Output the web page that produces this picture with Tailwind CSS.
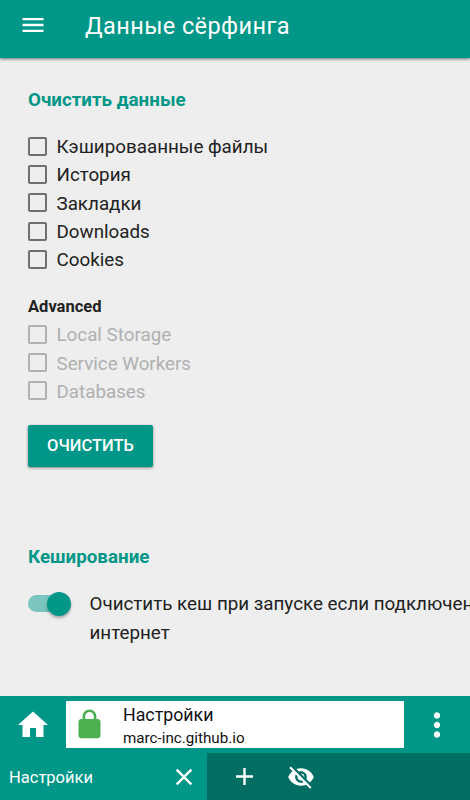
<!DOCTYPE html>
<html lang="ru">
<head>
<meta charset="utf-8">
<title>Данные сёрфинга</title>
<script src="https://cdn.jsdelivr.net/npm/@tailwindcss/browser@4"></script>
</head>
<body class="w-[470px] h-[800px] overflow-hidden flex flex-col bg-[#eeeeee] font-[Roboto,sans-serif] text-[#212121]">
<header class="relative z-10 h-[58px] shrink-0 bg-[#009788] shadow-[0_1px_3px_rgba(0,0,0,0.55)] flex items-center pl-[19px] pb-[8px] text-white">
  <svg class="size-[28px]" viewBox="0 0 24 24" fill="currentColor"><path d="M3 18h18v-2H3v2zm0-5h18v-2H3v2zm0-7v2h18V6H3z"/></svg>
  <h1 class="ml-[38px] pt-[2px] text-[23.5px] leading-[28px] tracking-[0.4px] whitespace-nowrap">Данные сёрфинга</h1>
</header>

<main class="grow overflow-hidden pl-[28px]">
  <h2 class="mt-[30px] h-[24px] leading-[24px] text-[18.8px] font-bold text-[#009788]">Очистить данные</h2>
  <ul class="mt-[21px] text-[18.8px] leading-[28.2px] whitespace-nowrap">
    <li class="flex items-center gap-[9.5px] h-[28.2px]"><span class="mb-[2px] size-[19px] border-2 border-[#707070] rounded-[2px]"></span><span>Кэшироваанные файлы</span></li>
    <li class="flex items-center gap-[9.5px] h-[28.2px]"><span class="mb-[2px] size-[19px] border-2 border-[#707070] rounded-[2px]"></span><span>История</span></li>
    <li class="flex items-center gap-[9.5px] h-[28.2px]"><span class="mb-px size-[19px] border-2 border-[#707070] rounded-[2px]"></span><span class="pt-px">Закладки</span></li>
    <li class="flex items-center gap-[9.5px] h-[28.2px]"><span class="mb-px size-[19px] border-2 border-[#707070] rounded-[2px]"></span><span>Downloads</span></li>
    <li class="flex items-center gap-[9.5px] h-[28.2px]"><span class="mb-px size-[19px] border-2 border-[#707070] rounded-[2px]"></span><span>Cookies</span></li>
  </ul>
  <h3 class="mt-[20px] h-[26px] leading-[26px] text-[16.5px] font-bold">Advanced</h3>
  <ul class="mt-[1px] text-[18.8px] leading-[28.2px] text-[#b0b0b0] whitespace-nowrap">
    <li class="flex items-center gap-[9.5px] h-[28.2px]"><span class="mb-px size-[19px] border-2 border-[#b0b0b0] rounded-[2px]"></span><span>Local Storage</span></li>
    <li class="flex items-center gap-[9.5px] h-[28.2px]"><span class="mb-px size-[19px] border-2 border-[#b0b0b0] rounded-[2px]"></span><span class="pt-px">Service Workers</span></li>
    <li class="flex items-center gap-[9.5px] h-[28.2px]"><span class="mb-px size-[19px] border-2 border-[#b0b0b0] rounded-[2px]"></span><span class="pt-px">Databases</span></li>
  </ul>
  <button class="mt-[19px] block w-[125px] h-[42px] pt-[2px] rounded-[2px] bg-[#009788] text-white text-[16.5px] font-medium shadow-[0_1px_3px_rgba(0,0,0,0.45)]">ОЧИСТИТЬ</button>
  <h2 class="mt-[78px] h-[24px] leading-[24px] text-[18.8px] font-bold text-[#009788]">Кеширование</h2>
  <div class="mt-[21px] flex">
    <div class="mt-[2px] w-[43px] h-[24px] shrink-0 flex items-center">
      <span class="w-[37px] h-[17px] rounded-full bg-[#7ac5bd]"></span>
      <span class="-ml-[18px] size-[24px] shrink-0 rounded-full bg-[#009788] shadow-[0_2px_3px_rgba(0,0,0,0.3)]"></span>
    </div>
    <p class="ml-[18.5px] text-[18.8px] leading-[29px] whitespace-nowrap">Очистить кеш при запуске если подключен<br>интернет</p>
  </div>
</main>

<footer class="shrink-0 h-[104px] bg-[#009788] text-white">
  <div class="h-[57px] flex items-center pl-[15px]">
    <svg class="size-[36px] shrink-0" viewBox="0 0 24 24" fill="currentColor"><path d="M10 20v-6h4v6h5v-8h3L12 3 2 12h3v8z"/></svg>
    <div class="ml-[15px] mb-px w-[338px] h-[47px] rounded-[1px] bg-white text-[#111] flex items-center pl-[7px]">
      <svg class="size-[33px] shrink-0 text-[#4caf50]" viewBox="0 0 24 24" fill="currentColor"><path d="M18 8h-1V6c0-2.760-2.240-5-5-5S7 3.240 7 6v2H6c-1.100 0-2 .9-2 2v10c0 1.100.9 2 2 2h12c1.100 0 2-.9 2-2V10c0-1.100-.9-2-2-2zM8.900 8V6c0-1.710 1.390-3.100 3.100-3.100s3.100 1.390 3.100 3.100v2z"/></svg>
      <div class="ml-[17px] pt-[6px] whitespace-nowrap">
        <div class="text-[17.8px] leading-[21px]">Настройки</div>
        <div class="pt-[2px] text-[15.2px] leading-[23px]">marc-inc.github.io</div>
      </div>
    </div>
    <svg class="ml-[14px] size-[38px] shrink-0" viewBox="0 0 24 24" fill="currentColor"><path d="M12 8c1.100 0 2-.9 2-2s-.9-2-2-2-2 .9-2 2 .9 2 2 2zm0 2c-1.100 0-2 .9-2 2s.9 2 2 2 2-.9 2-2-.9-2-2-2zm0 6c-1.100 0-2 .9-2 2s.9 2 2 2 2-.9 2-2-.9-2-2-2z"/></svg>
  </div>
  <div class="h-[47px] flex bg-[#006e62]">
    <div class="w-[207px] bg-[#009788] flex items-center justify-between pl-[9px] pr-[9px]">
      <span class="pt-[2px] text-[16.5px] leading-[24px]">Настройки</span>
      <svg class="size-[28px]" viewBox="0 0 24 24" fill="currentColor"><path d="M19 6.410L17.590 5 12 10.590 6.410 5 5 6.410 10.590 12 5 17.590 6.410 19 12 13.410 17.590 19 19 17.590 13.410 12z"/></svg>
    </div>
    <div class="flex items-center pl-[23px] gap-[28px]">
      <svg class="size-[29px]" viewBox="0 0 24 24" fill="currentColor"><path d="M19 13h-6v6h-2v-6H5v-2h6V5h2v6h6v2z"/></svg>
      <svg class="size-[28px]" viewBox="0 0 24 24" fill="currentColor"><path d="M12 7c2.760 0 5 2.240 5 5 0 .65-.13 1.260-.36 1.830l2.920 2.920c1.510-1.260 2.700-2.890 3.430-4.750-1.730-4.390-6-7.500-11-7.500-1.400 0-2.740.25-3.980.7l2.160 2.160C10.740 7.130 11.350 7 12 7zM2 4.270l2.280 2.280.46.46C3.080 8.300 1.780 10.020 1 12c1.730 4.390 6 7.500 11 7.500 1.550 0 3.030-.3 4.380-.84l.42.42L19.730 22 21 20.730 3.270 3 2 4.270zM7.530 9.800l1.550 1.550c-.05.21-.08.43-.08.65 0 1.660 1.340 3 3 3 .22 0 .44-.03.65-.08l1.550 1.550c-.67.33-1.410.53-2.200.53-2.760 0-5-2.240-5-5 0-.79.2-1.530.53-2.200zm4.310-.78l3.150 3.150.02-.16c0-1.660-1.340-3-3-3l-.17.01z"/></svg>
    </div>
  </div>
</footer>
</body>
</html>
